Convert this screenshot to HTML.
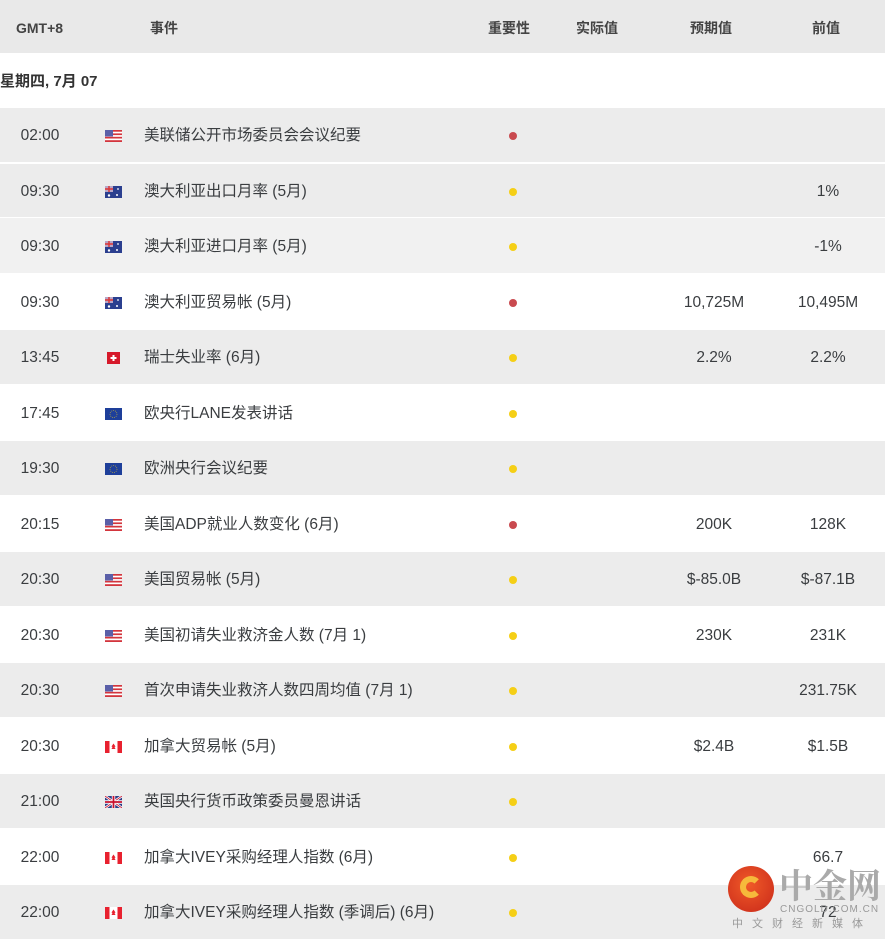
<!DOCTYPE html>
<html><head><meta charset="utf-8"><style>
*{margin:0;padding:0;box-sizing:border-box}
body{width:885px;height:939px;overflow:hidden;background:#fff;font-family:"Liberation Sans","Noto Sans CJK SC",sans-serif;color:#3a3d40;position:relative}
.hdr{position:absolute;top:0;left:0;width:885px;height:53px;background:#e9e9e9;font-size:14px;font-weight:bold;color:#444}
.hdr span{position:absolute;top:2px;height:53px;line-height:53px}
.date{position:absolute;top:53px;left:0;height:55px;width:885px;background:#fff;font-size:15px;font-weight:bold;color:#333;line-height:58px}
.row{position:absolute;left:0;width:885px;font-size:15.5px}
.row>span,.row>svg,.row>i{position:absolute;top:2px;bottom:0;margin:auto 0}
.row>span{height:22px;line-height:22px}
.g{background:#ececec}
.t{left:0;width:80px;text-align:center}
.f{left:105px;width:17px;height:12px}
.e{left:144px}
.d{left:509px;width:8px;height:8px;border-radius:50%}
.r{background:#c94a4f}.y{background:#f5cf16}
.c1{left:654px;width:120px;text-align:center}
.c2{left:768px;width:120px;text-align:center}
</style></head><body>
<div class="hdr"><span style="left:16px">GMT+8</span><span style="left:150px">事件</span><span style="left:488px">重要性</span><span style="left:576px">实际值</span><span style="left:690px">预期值</span><span style="left:812px">前值</span></div>
<div class="date">星期四, 7月 07</div>
<svg width="0" height="0" style="position:absolute"><defs>
<g id="us"><rect width="17" height="12" fill="#fff"/><rect y="0" width="17" height="1.7" fill="#d3353d"/><rect y="3.4" width="17" height="1.7" fill="#d3353d"/><rect y="6.8" width="17" height="1.7" fill="#d3353d"/><rect y="10.2" width="17" height="1.8" fill="#d3353d"/><rect width="8" height="6.5" fill="#5a5fa8"/></g>
<g id="au"><rect width="17" height="12" fill="#2b3f8f"/><rect width="8" height="6" fill="#b8a7c8"/><path d="M0 3h8M4 0v6" stroke="#d33" stroke-width="1.4"/><circle cx="13" cy="3" r=".9" fill="#fff"/><circle cx="12" cy="9" r="1" fill="#fff"/><circle cx="4" cy="9.5" r="1.2" fill="#fff"/></g>
<g id="ch"><rect x="2" width="13" height="12" fill="#d6192a"/><path d="M8.5 3v6M5.5 6h6" stroke="#fff" stroke-width="2"/></g>
<g id="eu"><rect width="17" height="12" fill="#1e3f9a"/><circle cx="8.5" cy="6" r="3.5" fill="none" stroke="#b7a540" stroke-width=".7" stroke-dasharray="1 1"/></g>
<g id="ca"><rect width="17" height="12" fill="#fff"/><rect width="4.5" height="12" fill="#e8212f"/><rect x="12.5" width="4.5" height="12" fill="#e8212f"/><path d="M8.5 2.5l2 3-1 .5 1 2h-4l1-2-1-.5z" fill="#e8212f"/></g>
<g id="gb"><rect width="17" height="12" fill="#2a3f88"/><path d="M0 0l17 12M17 0L0 12" stroke="#fff" stroke-width="2.4"/><path d="M0 0l17 12M17 0L0 12" stroke="#c8102e" stroke-width=".8"/><path d="M8.5 0v12M0 6h17" stroke="#fff" stroke-width="3.4"/><path d="M8.5 0v12M0 6h17" stroke="#c8102e" stroke-width="1.8"/></g>
</defs></svg>

<div class="row g" style="top:108px;height:54px"><span class="t">02:00</span><svg class="f"><use href="#us"/></svg><span class="e">美联储公开市场委员会会议纪要</span><i class="d r"></i></div>
<div class="row g" style="top:164px;height:53px"><span class="t">09:30</span><svg class="f"><use href="#au"/></svg><span class="e">澳大利亚出口月率 (5月)</span><i class="d y"></i><span class="c2">1%</span></div>
<div class="row" style="top:218px;height:55px;background:#f1f1f1"><span class="t">09:30</span><svg class="f"><use href="#au"/></svg><span class="e">澳大利亚进口月率 (5月)</span><i class="d y"></i><span class="c2">-1%</span></div>
<div class="row" style="top:273px;height:57px"><span class="t">09:30</span><svg class="f"><use href="#au"/></svg><span class="e">澳大利亚贸易帐 (5月)</span><i class="d r"></i><span class="c1">10,725M</span><span class="c2">10,495M</span></div>
<div class="row g" style="top:330px;height:54px"><span class="t">13:45</span><svg class="f"><use href="#ch"/></svg><span class="e">瑞士失业率 (6月)</span><i class="d y"></i><span class="c1">2.2%</span><span class="c2">2.2%</span></div>
<div class="row" style="top:384px;height:57px"><span class="t">17:45</span><svg class="f"><use href="#eu"/></svg><span class="e">欧央行LANE发表讲话</span><i class="d y"></i></div>
<div class="row g" style="top:441px;height:54px"><span class="t">19:30</span><svg class="f"><use href="#eu"/></svg><span class="e">欧洲央行会议纪要</span><i class="d y"></i></div>
<div class="row" style="top:495px;height:57px"><span class="t">20:15</span><svg class="f"><use href="#us"/></svg><span class="e">美国ADP就业人数变化 (6月)</span><i class="d r"></i><span class="c1">200K</span><span class="c2">128K</span></div>
<div class="row g" style="top:552px;height:54px"><span class="t">20:30</span><svg class="f"><use href="#us"/></svg><span class="e">美国贸易帐 (5月)</span><i class="d y"></i><span class="c1">$-85.0B</span><span class="c2">$-87.1B</span></div>
<div class="row" style="top:606px;height:57px"><span class="t">20:30</span><svg class="f"><use href="#us"/></svg><span class="e">美国初请失业救济金人数 (7月 1)</span><i class="d y"></i><span class="c1">230K</span><span class="c2">231K</span></div>
<div class="row g" style="top:663px;height:54px"><span class="t">20:30</span><svg class="f"><use href="#us"/></svg><span class="e">首次申请失业救济人数四周均值 (7月 1)</span><i class="d y"></i><span class="c2">231.75K</span></div>
<div class="row" style="top:717px;height:57px"><span class="t">20:30</span><svg class="f"><use href="#ca"/></svg><span class="e">加拿大贸易帐 (5月)</span><i class="d y"></i><span class="c1">$2.4B</span><span class="c2">$1.5B</span></div>
<div class="row g" style="top:774px;height:54px"><span class="t">21:00</span><svg class="f"><use href="#gb"/></svg><span class="e">英国央行货币政策委员曼恩讲话</span><i class="d y"></i></div>
<div class="row" style="top:828px;height:57px"><span class="t">22:00</span><svg class="f"><use href="#ca"/></svg><span class="e">加拿大IVEY采购经理人指数 (6月)</span><i class="d y"></i><span class="c2">66.7</span></div>
<div class="row g" style="top:885px;height:54px"><span class="t">22:00</span><svg class="f"><use href="#ca"/></svg><span class="e">加拿大IVEY采购经理人指数 (季调后) (6月)</span><i class="d y"></i><span class="c2">72</span></div>

<div style="position:absolute;left:728px;top:866px;width:46px;height:46px;border-radius:50%;background:radial-gradient(circle at 45% 40%,#f05a28,#c8281a)"></div>
<div style="position:absolute;left:740px;top:876px;width:22px;height:22px;border-radius:50%;border:6px solid #f6b93b;border-right-color:transparent"></div>
<div style="position:absolute;left:779px;top:864px;font-size:34px;font-weight:bold;color:#aaa;font-family:'Noto Serif CJK SC','Noto Sans CJK SC',serif;line-height:40px">中金网</div>
<div style="position:absolute;left:780px;top:904px;font-size:10px;color:#999;letter-spacing:1px">CNGOLD.COM.CN</div>
<div style="position:absolute;left:732px;top:915px;font-size:11px;color:#999;letter-spacing:9px">中文财经新媒体</div>
</body></html>
